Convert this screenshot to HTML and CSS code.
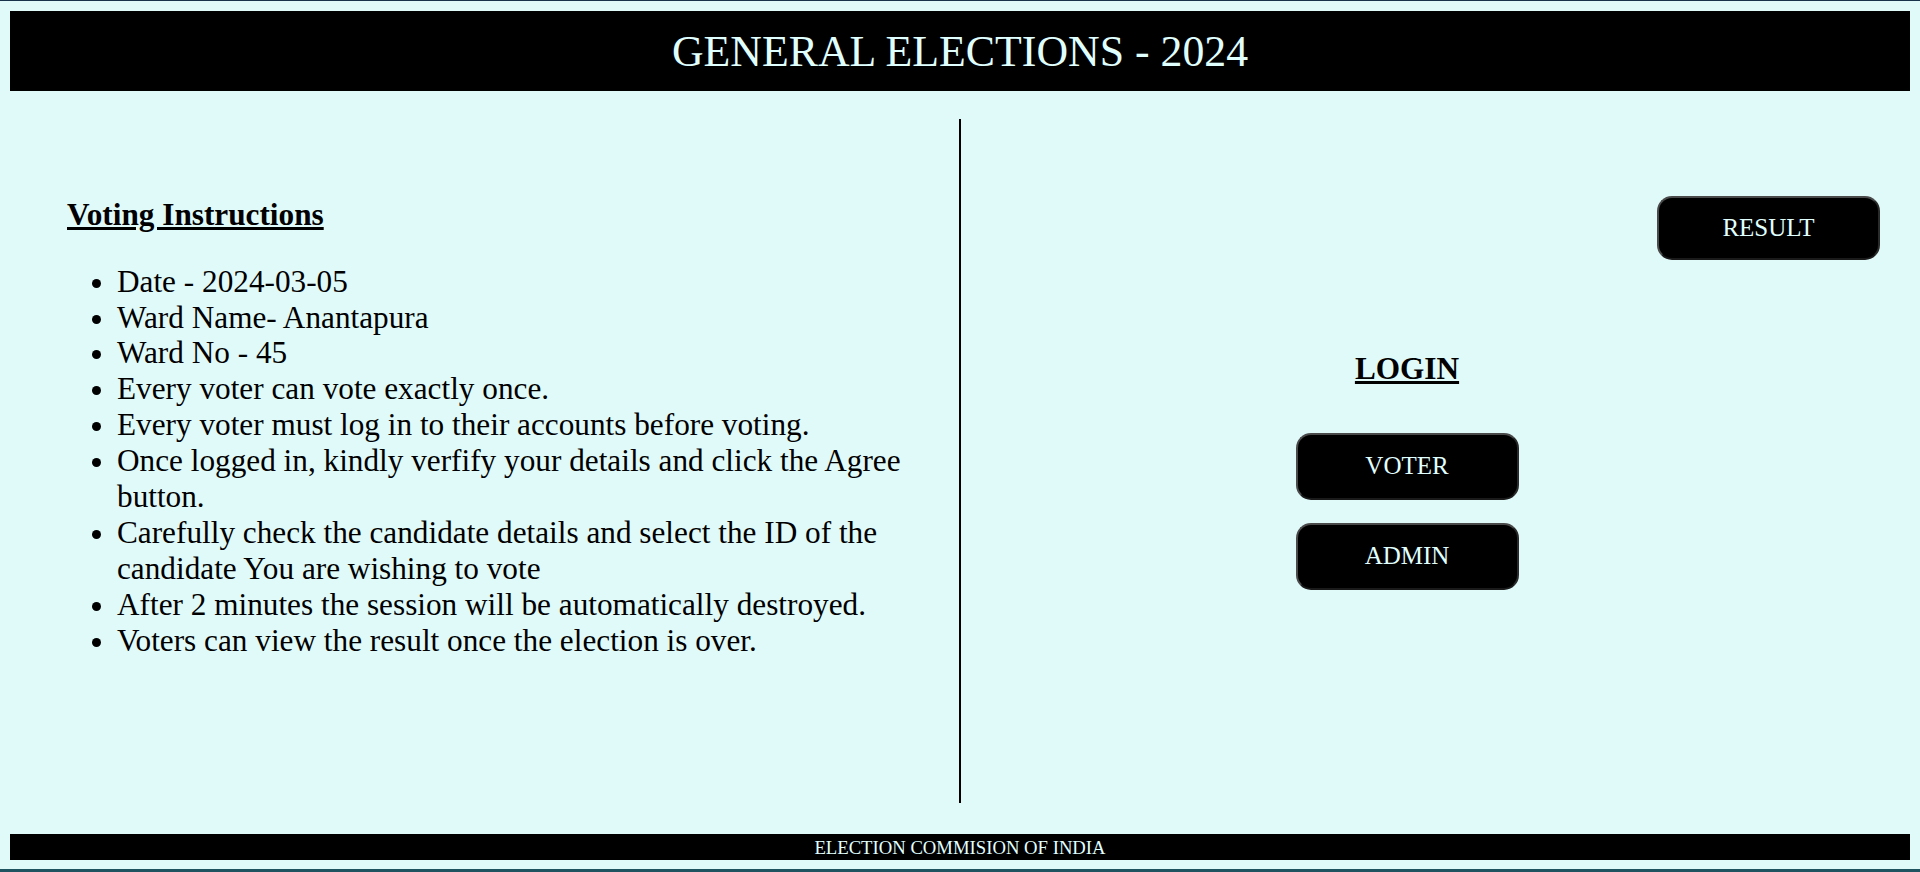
FILE: index.html
```html
<!DOCTYPE html>
<html lang="en">
<head>
<meta charset="utf-8">
<title>General Elections - 2024</title>
<link rel="stylesheet" href="styles.css">
</head>
<body>
  <header class="topbar">GENERAL ELECTIONS - 2024</header>
  <main class="content">
    <section class="instructions">
      <h3 class="section-title">Voting Instructions</h3>
      <ul class="rules">
        <li>Date - 2024-03-05</li>
        <li>Ward Name- Anantapura</li>
        <li>Ward No - 45</li>
        <li>Every voter can vote exactly once.</li>
        <li>Every voter must log in to their accounts before voting.</li>
        <li>Once logged in, kindly verfify your details and click the Agree button.</li>
        <li>Carefully check the candidate details and select the ID of the candidate You are wishing to vote</li>
        <li>After 2 minutes the session will be automatically destroyed.</li>
        <li>Voters can view the result once the election is over.</li>
      </ul>
    </section>
    <section class="actions">
      <button class="btn btn-result">RESULT</button>
      <div class="login">
        <h3 class="section-title">LOGIN</h3>
        <button class="btn btn-login">VOTER</button>
        <button class="btn btn-login btn-admin">ADMIN</button>
      </div>
    </section>
  </main>
  <footer class="bottombar">ELECTION COMMISION OF INDIA</footer>
</body>
</html>
```
FILE: styles.css
```css
html, body {
  margin: 0;
  padding: 0;
}
body {
  box-sizing: border-box;
  min-height: 100vh;
  display: flex;
  flex-direction: column;
  background: #e0fafa;
  border-top: 1px solid #17324a;
  border-bottom: 3px solid #1f5360;
  padding: 10px 10px 9px;
  font-family: "Liberation Serif", "Times New Roman", serif;
  color: #000;
}
.topbar {
  height: 80px;
  background: #000;
  color: #e0ffff;
  font-size: 43.8px;
  line-height: 80px;
  text-align: center;
}
.content {
  display: flex;
  margin-top: 28px;
  height: 684px;
}
.instructions {
  flex: 0 0 951px;
  box-sizing: border-box;
  border-right: 2px solid #000;
  padding: 78px 10px 0 57px;
}
.section-title {
  margin: 0;
  font-size: 31.25px;
  font-weight: bold;
  text-decoration: underline;
  line-height: 35.6px;
}
.rules {
  margin: 31px 0 0;
  padding-left: 50px;
  font-size: 31.25px;
  line-height: 35.9px;
}
.actions {
  flex: 1;
  display: flex;
  flex-direction: column;
  padding-top: 77px;
}
.btn {
  background: #000;
  color: #e0ffff;
  font-family: "Liberation Serif", "Times New Roman", serif;
  font-size: 25px;
  border: 2px solid #4a4a4a;
  border-bottom-color: #1a1a1a;
  border-right-color: #2a2a2a;
  border-radius: 15px;
  width: 223px;
  padding: 0;
  cursor: pointer;
}
.btn-result {
  align-self: flex-end;
  margin-right: 30px;
  height: 64px;
}
.login {
  display: flex;
  flex-direction: column;
  align-items: center;
  margin-right: 57px;
  margin-top: 91px;
}
.btn-login {
  height: 67px;
  margin-top: 46px;
}
.btn-admin {
  margin-top: 23px;
}
.bottombar {
  margin-top: auto;
  height: 26px;
  background: #000;
  color: #e0ffff;
  font-size: 18.7px;
  line-height: 27px;
  text-align: center;
}
```
